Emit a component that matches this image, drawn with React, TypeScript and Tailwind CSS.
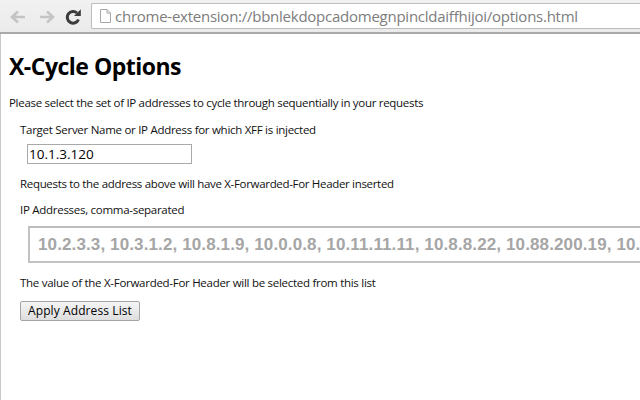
export default function App() {
  const f = { fontFamily: '"Open Sans", sans-serif' };
  return (
    <div className="h-[400px] w-[640px] overflow-hidden bg-white flex flex-col font-['Open_Sans',sans-serif]" style={f}>
      <div className="h-[34px] shrink-0 flex items-start border-b-2 border-[#a9a9a9] bg-gradient-to-b from-[#f1f1f1] to-[#ebebeb]">
        <div className="flex items-center h-[33px] pl-[9px] w-[91px] shrink-0">
          <svg width="18" height="18" viewBox="0 0 18 18" className="mr-[10px]">
            <path d="M16 9H4M9 3.500 3 9l6 5.500" fill="none" stroke="#c4c4c4" strokeWidth="2.600" />
          </svg>
          <svg width="18" height="18" viewBox="0 0 18 18" className="mr-[9px] ml-[1px]">
            <path d="M2 9h12M9 3.500 15 9l-6 5.500" fill="none" stroke="#c4c4c4" strokeWidth="2.600" />
          </svg>
          <svg width="16" height="16" viewBox="0 0 16 16">
            <path d="M13.500 10.500A5.800 5.800 0 1 1 12 4" fill="none" stroke="#3c3c3c" strokeWidth="3" />
            <path d="M9 7H15.800V0.200Z" fill="#3c3c3c" />
          </svg>
        </div>
        <div className="mt-[3px] h-[26px] flex-1 flex items-center bg-white border border-[#bdbdbd] border-r-0 rounded-l-[2px] pl-[6px]">
          <svg width="13" height="16" viewBox="0 0 13 16" className="mr-[3px] shrink-0 ml-[1px]">
            <path d="M1.500 1.500h6.500l3.500 3.500v9.500h-10zM8 1.500v3.500h3.500" fill="#fff" stroke="#a8a8a8" />
          </svg>
          <span className="text-[15px] leading-none text-[#7d7d7d] whitespace-nowrap tracking-[-0.25px]">chrome-extension://bbnlekdopcadomegnpincldaiffhijoi/options.html</span>
        </div>
      </div>
      <div className="flex-1 border-l border-[#c8c8c8] pl-2 text-[11.5px] text-[#111] overflow-hidden">
        <h1 className="mt-[16px] text-[23px] leading-[32px] font-bold text-black tracking-[-0.5px]">X-Cycle Options</h1>
        <p className="mt-[13px] leading-[16px] tracking-[-0.3px]">Please select the set of IP addresses to cycle through sequentially in your requests</p>
        <div className="pl-[11px]">
          <p className="mt-[11px] leading-[16px] tracking-[-0.28px]">Target Server Name or IP Address for which XFF is injected</p>
          <input readOnly value="10.1.3.120" className="block mt-[6px] ml-[7px] w-[165px] h-[20px] border border-[#a9a9a9] px-[1px] text-[13.5px] text-black outline-none" />
          <p className="mt-[12px] leading-[16px] tracking-[-0.32px]">Requests to the address above will have X-Forwarded-For Header inserted</p>
          <p className="mt-[10px] leading-[16px] tracking-[-0.28px]">IP Addresses, comma-separated</p>
          <div className="mt-[8px] ml-[8px] w-[700px] h-[37px] border-2 border-[#c2c2c2] border-t-[#bdbdbd] flex items-center pl-[8px] whitespace-nowrap overflow-hidden">
            <span className="font-['Liberation_Sans',sans-serif] font-bold text-[17px] text-[#a6a6a6] tracking-[0.12px]">10.2.3.3, 10.3.1.2, 10.8.1.9, 10.0.0.8, 10.11.11.11, 10.8.8.22, 10.88.200.19, 10.</span>
          </div>
          <p className="mt-[12px] leading-[16px] tracking-[-0.28px]">The value of the X-Forwarded-For Header will be selected from this list</p>
          <button className="block mt-[10px] w-[120px] h-[20px] border border-[#a5a5a5] rounded-[2px] bg-gradient-to-b from-[#f5f5f5] to-[#dedede] text-[12px] leading-none text-black tracking-[0.1px]">Apply Address List</button>
        </div>
      </div>
    </div>
  );
}
